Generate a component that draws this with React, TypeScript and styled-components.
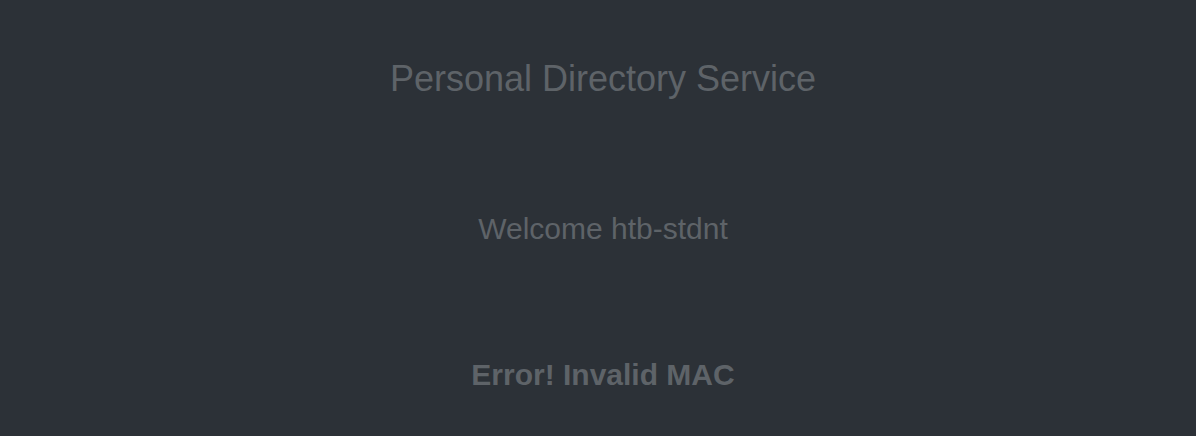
import React from "react";
import styled, { createGlobalStyle } from "styled-components";

const Global = createGlobalStyle`
  html, body { margin: 0; padding: 0; background: #2c3137; }
  body { font-family: "Liberation Sans", Arial, sans-serif; }
`;

const Page = styled.main`
  min-height: 436px;
  box-sizing: border-box;
  padding: 58px 0 0 10px;
  display: flex;
  flex-direction: column;
  align-items: center;
  color: #5e6368;
  background: #2c3137;
`;

const Title = styled.h1`
  margin: 0;
  font-size: 36px;
  font-weight: 400;
  line-height: 41px;
`;

const Welcome = styled.p`
  margin: 112px 0 0;
  font-size: 30px;
  line-height: 35px;
`;

const ErrorText = styled.p`
  margin: 111px 0 0;
  font-size: 30px;
  font-weight: 700;
  line-height: 35px;
`;

export default function App() {
  return (
    <>
      <Global />
      <Page>
        <Title>Personal Directory Service</Title>
        <Welcome>Welcome htb-stdnt</Welcome>
        <ErrorText>Error! Invalid MAC</ErrorText>
      </Page>
    </>
  );
}
